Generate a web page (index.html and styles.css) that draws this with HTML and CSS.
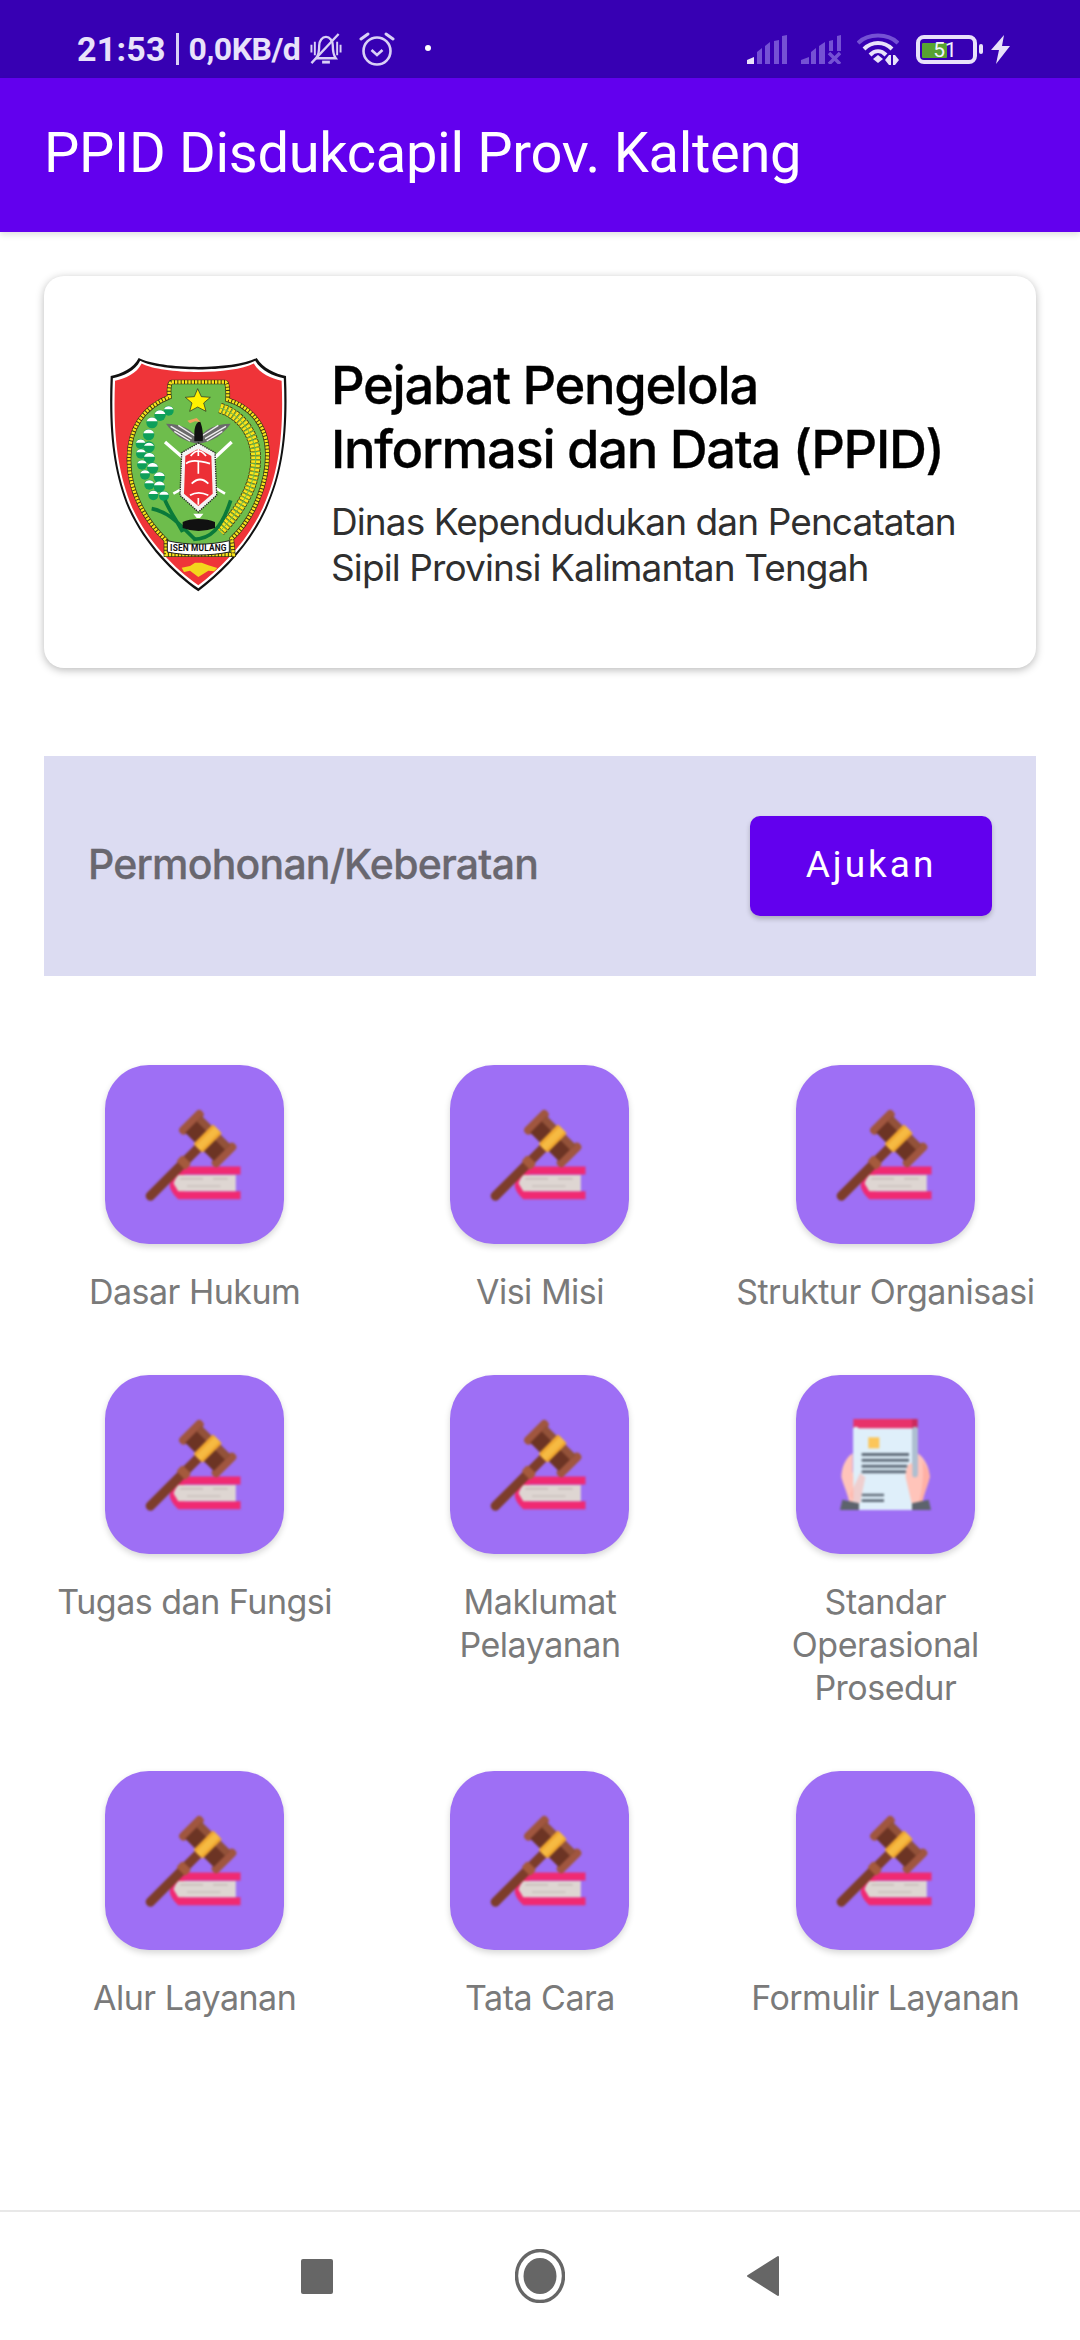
FILE: index.html
```html
<!DOCTYPE html>
<html lang="id">
<head>
<meta charset="utf-8">
<title>PPID Disdukcapil Prov. Kalteng</title>
<link rel="stylesheet" href="styles.css">
</head>
<body>
<svg class="defs" width="0" height="0" aria-hidden="true">
  <defs>
    <symbol id="gavel" viewBox="45 45 535 535">
      <path fill="#f02a72" d="M275 348H450V372H286L266 376 252 398 266 420 286 422H450V446H264C250 434 241 420 238 406 243 380 255 360 275 348Z"/>
      <path fill="#ded6d2" d="M264 374H436V422H264C258 412 252 404 250 398 254 388 258 380 264 374Z"/>
      <path fill="#c6bcb8" d="M270 383H338V387H270ZM368 383H412V387H368ZM290 405H390V409H290Z"/>
      <g transform="translate(352 265) rotate(45)">
        <rect x="-14" y="30" width="28" height="226" rx="13" fill="#7d3d2a"/>
        <rect x="-19" y="88" width="38" height="26" rx="6" fill="#a55a3c"/>
        <rect x="-82" y="-46" width="26" height="92" rx="12" fill="#a0563f"/>
        <rect x="56" y="-46" width="26" height="92" rx="12" fill="#a0563f"/>
        <rect x="-60" y="-35" width="120" height="70" fill="#6c3424"/>
        <rect x="-60" y="-35" width="120" height="22" fill="#935239"/>
        <rect x="-19" y="-41" width="38" height="82" rx="3" fill="#efa62f"/>
        <rect x="-10" y="-41" width="20" height="82" fill="#f6ba42"/>
      </g>
    </symbol>
    <symbol id="doc" viewBox="48 45 537 537">
      <path fill="#ffc4ba" d="M218 280C195 295 184 325 184 352 190 375 205 405 208 430H240L256 352C256 330 250 312 240 310 230 310 222 330 218 340Z"/>
      <path fill="#aebfd0" d="M395 200H413V450H395Z"/>
      <path fill="#dfeffa" d="M220 200H396V450H220Z"/>
      <path fill="#e8336a" d="M220 177H396V205H220Z"/>
      <path fill="#cc2a5c" d="M396 177H413V205H396Z"/>
      <rect x="265" y="232" width="33" height="33" fill="#fcc65a"/>
      <path fill="#5f6b78" d="M245 279H387V288H245ZM245 296H387V305H245ZM245 314H382V323H245ZM245 331H378V340H245ZM245 401H312V409H245ZM245 418H312V426H245Z"/>
      <path fill="#ffc4ba" d="M413 280C435 295 449 325 449 352 444 375 430 405 427 430H395L377 352C377 330 382 312 392 310 400 310 406 330 413 345Z"/>
      <path fill="#ffb0a4" d="M240 340 256 352 240 430H225L210 405Z" opacity=".5"/>
      <path fill="#ffb0a4" d="M427 300C440 320 449 335 449 352 444 375 430 405 427 430H416C428 390 432 340 427 300Z"/>
      <path fill="#5d636c" d="M187 419 237 430V450H180ZM446 419 396 430V450H453Z"/>
      <rect x="220" y="200" width="16" height="152" rx="8" fill="#dfeffa"/>
      <rect x="397" y="200" width="16" height="152" rx="8" fill="#aebfd0"/>
    </symbol>
  </defs>
</svg>

<div class="app">
  <header class="status">
    <div class="status-left">
      <span class="time">21:53</span>
      <span class="sep"></span>
      <span class="speed">0,0KB/d</span>
      <svg class="si-bell" viewBox="0 0 34 34" width="34" height="33">
        <g fill="none" stroke="#d9d0f6" stroke-width="2.4">
          <path d="M7 26C10 22 10 18 10 13 10 8 13 4 17 4 21 4 24 8 24 13 24 18 24 22 27 26H7Z"/>
          <path d="M13 30H21" stroke-width="3"/>
          <path d="M2 12V20M5.500 9V23M28.500 9V23M32 12V20" stroke-width="2"/>
          <path d="M2 31 30 1" stroke-width="2.4"/>
        </g>
      </svg>
      <svg class="si-alarm" viewBox="0 0 36 34" width="36" height="34">
        <g fill="none" stroke="#d9d0f6" stroke-width="2.6">
          <circle cx="18" cy="19" r="13.500"/>
          <path d="M12.500 18 18 23 23.500 18"/>
          <path d="M2 7 9 2M34 7 27 2" stroke-linecap="round" stroke-width="3"/>
        </g>
      </svg>
      <span class="dot"></span>
    </div>
    <div class="status-right">
      <svg class="si-signal" viewBox="0 0 40 29" width="40" height="29">
        <path fill="#7551d4" d="M10 17 15 13V29H10ZM18 11 23 7V29H18ZM27 6 32 5V29H27ZM35 1 40 0V29H35Z"/>
        <path fill="#e8e2fa" d="M0 29V25L7 22V29Z"/>
      </svg>
      <svg class="si-signal2" viewBox="0 0 40 29" width="40" height="29">
        <path fill="#7551d4" d="M0 29V25L8 22V29ZM10 17 15 13V29H10ZM18 11 24 7V29H18ZM28 6 32 5V16H28ZM36 1 40 0V16H36Z"/>
        <path fill="none" stroke="#7551d4" stroke-width="3.400" d="M28 18 39 29M39 18 28 29"/>
      </svg>
      <svg class="si-wifi" viewBox="0 0 42 32" width="42" height="32">
        <path fill="none" stroke="#7551d4" stroke-width="4" d="M1 10C11 0 31 0 41 10"/>
        <path fill="none" stroke="#e8e2fa" stroke-width="4" d="M7 16C15 8 27 8 35 16M13 22C18 17 24 17 29 22"/>
        <path fill="#e8e2fa" d="M21 22 26 26 21 30 16 26Z"/>
        <path fill="#e8e2fa" d="M32 22H34V32H32L28 27ZM36 22H38L42 27 38 32H36Z"/>
      </svg>
      <div class="battery">
        <span class="battery-body"><span class="battery-fill"></span><span class="battery-num">51</span></span>
        <span class="battery-tip"></span>
      </div>
      <svg class="si-bolt" viewBox="0 0 20 29" width="20" height="29">
        <path fill="#e8e2fa" d="M13 0 0 15H8L5 29 19 11H11Z"/>
      </svg>
    </div>
  </header>

  <div class="appbar">PPID Disdukcapil Prov. Kalteng</div>

  <main class="main">
    <section class="card">
      <svg class="logo" viewBox="0 0 720 840" width="240" height="280" role="img" aria-label="Lambang Provinsi Kalimantan Tengah">
        <path fill="#111" d="M176 78C240 112 460 115 530 78 550 110 585 125 618 132 625 300 610 420 560 530 510 640 430 720 355 778 280 725 195 640 145 530 100 420 85 300 92 132 125 125 160 110 176 78Z"/>
        <path fill="#fff" transform="translate(355 415) scale(.975) translate(-355 -415)" d="M176 78C240 112 460 115 530 78 550 110 585 125 618 132 625 300 610 420 560 530 510 640 430 720 355 778 280 725 195 640 145 530 100 420 85 300 92 132 125 125 160 110 176 78Z"/>
        <path fill="#ef3439" transform="translate(355 415) scale(.95) translate(-355 -415)" d="M176 78C240 112 460 115 530 78 550 110 585 125 618 132 625 300 610 420 560 530 510 640 430 720 355 778 280 725 195 640 145 530 100 420 85 300 92 132 125 125 160 110 176 78Z"/>
        <path fill="#6ebd4c" stroke="#3a3412" stroke-width="14" d="M275 150H435Q445 150 443 203C500 220 560 270 562 360 565 450 520 560 455 620L460 668H258L258 625C190 560 145 470 147 380 147 290 190 225 268 195 264 150 275 150 275 150Z"/>
        <path fill="none" stroke="#f8e41c" stroke-width="10" stroke-dasharray="7 3" d="M275 150H435Q445 150 443 203C500 220 560 270 562 360 565 450 520 560 455 620L460 668H258L258 625C190 560 145 470 147 380 147 290 190 225 268 195 264 150 275 150 275 150Z"/>
        <path fill="#fff200" stroke="#222" stroke-width="2" d="M353 170 364 194 391 196 371 213 378 238 353 225 329 238 336 213 316 196 343 194Z"/>
        <g>
          <circle cx="266" cy="236" r="15" fill="#0e9f5a"/><circle cx="240" cy="250" r="17" fill="#0e9f5a"/><circle cx="216" cy="272" r="17" fill="#0e9f5a"/><circle cx="206" cy="308" r="17" fill="#0e9f5a"/><circle cx="182" cy="336" r="15" fill="#0e9f5a"/><circle cx="207" cy="345" r="17" fill="#0e9f5a"/><circle cx="183" cy="365" r="15" fill="#0e9f5a"/><circle cx="208" cy="378" r="17" fill="#0e9f5a"/><circle cx="186" cy="398" r="15" fill="#0e9f5a"/><circle cx="218" cy="408" r="17" fill="#0e9f5a"/><circle cx="195" cy="428" r="15" fill="#0e9f5a"/><circle cx="238" cy="436" r="17" fill="#0e9f5a"/><circle cx="208" cy="458" r="15" fill="#0e9f5a"/><circle cx="238" cy="464" r="17" fill="#0e9f5a"/><circle cx="220" cy="490" r="15" fill="#0e9f5a"/><circle cx="252" cy="492" r="15" fill="#0e9f5a"/>
          <path fill="#fff" d="M252 232a15 15 0 0 1 28 0zM224 246a17 17 0 0 1 32 0zM200 268a17 17 0 0 1 32 0zM190 304a17 17 0 0 1 32 0zM168 332a15 15 0 0 1 28 0zM192 341a17 17 0 0 1 30 0zM169 361a15 15 0 0 1 28 0zM192 374a17 17 0 0 1 32 0zM172 394a15 15 0 0 1 28 0zM202 404a17 17 0 0 1 32 0zM181 424a15 15 0 0 1 28 0zM222 432a17 17 0 0 1 32 0zM194 454a15 15 0 0 1 28 0zM222 460a17 17 0 0 1 32 0zM206 486a15 15 0 0 1 28 0zM238 488a15 15 0 0 1 28 0z"/>
        </g>
        <path fill="none" stroke="#4a3a10" stroke-width="32" stroke-dasharray="9 3" d="M420 228C490 250 535 320 526 400 518 480 470 545 420 598"/>
        <path fill="none" stroke="#f8e41c" stroke-width="27" stroke-dasharray="8 4" d="M420 228C490 250 535 320 526 400 518 480 470 545 420 598"/>
        <path fill="none" stroke="#6ebd4c" stroke-width="3" d="M420 228C490 250 535 320 526 400 518 480 470 545 420 598"/>
        <path fill="none" stroke="#fff" stroke-width="10" d="M255 330 330 395M455 330 385 395"/>
        <path fill="none" stroke="#fff" stroke-width="8" d="M385 455 435 485M325 460 280 485"/>
        <path fill="#6a6a6a" d="M258 275C300 275 340 290 355 325 370 290 410 275 452 275 430 305 400 330 355 335 310 330 280 305 258 275Z"/>
        <path fill="none" stroke="#f0f0f0" stroke-width="4" d="M272 283 335 320M295 280 345 312M283 298 330 327M438 283 375 320M415 280 365 312M427 298 380 327"/>
        <path fill="#111" d="M343 305C343 283 350 270 360 268 368 285 370 310 368 328H343Z"/>
        <path fill="#f0a35b" d="M322 266 350 258 362 270 345 268 330 274Z"/>
        <path fill="#f4f4f4" stroke="#222" stroke-width="4" stroke-dasharray="4 3" d="M355 333 405 362 410 490 355 540 300 490 305 362Z"/>
        <path fill="#ec2f36" d="M355 350 394 372 398 485 355 522 312 485 316 372Z"/>
        <path fill="none" stroke="#fff" stroke-width="5" d="M332 372Q355 342 378 372M355 350V372M318 395Q335 378 390 395M355 385V425M335 455Q360 430 385 455M330 490Q355 475 385 490M355 498V518"/>
        <path fill="none" stroke="#0a7a3a" stroke-width="11" d="M215 530C270 540 300 580 345 622M255 505C270 540 290 565 308 600M340 622C390 622 425 590 452 505"/>
        <path fill="#111" d="M308 570C330 558 380 558 405 570V588Q355 606 308 588Z"/>
        <path fill="#fff" d="M340 545H370L360 558H350Z"/>
        <path fill="#fff" stroke="#222" stroke-width="3" d="M262 626C320 640 390 640 448 626V660C390 672 320 672 262 660Z"/>
        <text class="logo-text" x="355" y="656" text-anchor="middle">ISEN MULANG</text>
        <path fill="#f3d61c" d="M305 707 330 702 345 692H365L385 700 412 708 402 718 385 716 355 735 330 716 312 720Z"/>
      </svg>
      <div class="card-text">
        <h1 class="card-title">Pejabat Pengelola<br>Informasi dan Data (PPID)</h1>
        <p class="card-sub">Dinas Kependudukan dan Pencatatan<br>Sipil Provinsi Kalimantan Tengah</p>
      </div>
    </section>

    <section class="banner">
      <span class="banner-label">Permohonan/Keberatan</span>
      <button class="btn" type="button">Ajukan</button>
    </section>

    <section class="grid">
      <a class="item"><span class="tile"><svg class="tile-icon"><use href="#gavel"/></svg></span><span class="label">Dasar Hukum</span></a>
      <a class="item"><span class="tile"><svg class="tile-icon"><use href="#gavel"/></svg></span><span class="label">Visi Misi</span></a>
      <a class="item"><span class="tile"><svg class="tile-icon"><use href="#gavel"/></svg></span><span class="label">Struktur Organisasi</span></a>
      <a class="item"><span class="tile"><svg class="tile-icon"><use href="#gavel"/></svg></span><span class="label">Tugas dan Fungsi</span></a>
      <a class="item"><span class="tile"><svg class="tile-icon"><use href="#gavel"/></svg></span><span class="label">Maklumat<br>Pelayanan</span></a>
      <a class="item"><span class="tile"><svg class="tile-icon"><use href="#doc"/></svg></span><span class="label">Standar<br>Operasional<br>Prosedur</span></a>
      <a class="item"><span class="tile"><svg class="tile-icon"><use href="#gavel"/></svg></span><span class="label">Alur Layanan</span></a>
      <a class="item"><span class="tile"><svg class="tile-icon"><use href="#gavel"/></svg></span><span class="label">Tata Cara</span></a>
      <a class="item"><span class="tile"><svg class="tile-icon"><use href="#gavel"/></svg></span><span class="label">Formulir Layanan</span></a>
    </section>
  </main>

  <nav class="navbar">
    <span class="nav-square"></span>
    <svg class="nav-home" viewBox="0 0 50 54" width="50" height="54">
      <ellipse cx="25" cy="27" rx="23.500" ry="25.500" fill="none" stroke="#666" stroke-width="3.400"/>
      <ellipse cx="25" cy="27" rx="16.500" ry="18" fill="#666"/>
    </svg>
    <svg class="nav-back" viewBox="0 0 32 42" width="32" height="42">
      <path fill="#666" stroke="#666" stroke-width="2" stroke-linejoin="round" d="M31 2V40L1 21Z"/>
    </svg>
  </nav>
</div>
</body>
</html>
```

FILE: styles.css
```css
* { box-sizing: border-box; }
html, body { margin: 0; padding: 0; }
body { width: 1080px; height: 2340px; background: #fff; font-family: "Inter", "Roboto", sans-serif; overflow: hidden; }
.defs { position: absolute; }

.app { width: 1080px; height: 2340px; display: flex; flex-direction: column; }

.status { height: 78px; background: #3700b3; color: #e8e2fa; display: flex; justify-content: space-between; align-items: center; padding: 20px 69px 0 77px; font-family: "Roboto", sans-serif; }
.status-left { display: flex; align-items: center; }
.time { font-size: 34px; font-weight: 700; letter-spacing: 0.2px; }
.sep { width: 3px; height: 32px; background: #d9d0f6; margin: 0 10px; }
.speed { font-size: 32px; font-weight: 700; letter-spacing: -0.5px; }
.si-bell { margin-left: 9px; }
.si-alarm { margin-left: 16px; }
.dot { width: 6px; height: 6px; background: #fff; border-radius: 50%; margin: 0 0 2px 30px; }
.status-right { display: flex; align-items: center; }
.si-signal2 { margin-left: 14px; }
.si-wifi { margin-left: 16px; }
.battery { display: flex; align-items: center; gap: 2px; margin-left: 17px; }
.battery-body { width: 61px; height: 29px; border: 4px solid #e8e2fa; border-radius: 8px; position: relative; display: block; }
.battery-fill { position: absolute; left: 2px; top: 4px; bottom: 2px; width: 25px; background: #57a331; border-radius: 1px; }
.battery-num { position: absolute; inset: 0; text-align: center; font-size: 21px; line-height: 22px; font-weight: 400; color: #f2f2ff; padding-right: 3px; }
.battery-tip { width: 4px; height: 10px; background: #e8e2fa; border-radius: 2px; }
.si-bolt { margin-left: 8px; }

.appbar { height: 154px; background: #6200ee; color: #fff; font-family: "Roboto", sans-serif; font-size: 56px; letter-spacing: -0.3px; line-height: 150px; padding-left: 44px; box-shadow: 0 3px 6px rgba(0,0,0,.12); position: relative; }

.main { flex: 1; display: flex; flex-direction: column; padding-top: 44px; }

.card { margin: 0 44px; height: 392px; background: #fff; border-radius: 20px; box-shadow: 0 2px 8px rgba(0,0,0,.28); display: flex; align-items: center; padding-left: 36px; }
.logo { flex: none; }
.card-text { margin-left: 11px; }
.card-title { margin: 0; font-size: 52.500px; line-height: 64px; font-weight: 500; color: #000; letter-spacing: -1.300px; -webkit-text-stroke: .3px #000; }
.card-sub { margin: 18px 0 0; font-size: 37px; line-height: 46px; color: #2f2f2f; letter-spacing: -0.900px; }
.logo-text { font-family: "Roboto", sans-serif; font-size: 25px; font-weight: 700; letter-spacing: .5px; fill: #111; }

.banner { margin: 88px 44px 0; height: 220px; background: #dcdcf2; display: flex; align-items: center; justify-content: space-between; padding: 0 44px; }
.banner-label { font-size: 41px; font-weight: 500; color: #69676f; letter-spacing: -0.800px; margin-top: -4px; -webkit-text-stroke: .3px #69676f; }
.btn { width: 242px; height: 100px; border: 0; border-radius: 10px; background: #6200ee; color: #fff; font-family: "Roboto", sans-serif; font-size: 37px; letter-spacing: 3px; padding-bottom: 4px; box-shadow: 0 3px 5px rgba(0,0,0,.22); }

.grid { margin-top: 89px; padding: 0 22px; display: grid; grid-template-columns: repeat(3, 1fr); row-gap: 62px; }
.item { display: flex; flex-direction: column; align-items: center; text-align: center; }
.tile { width: 179px; height: 179px; background: #9e6ff5; border-radius: 44px; box-shadow: 0 3px 6px rgba(0,0,0,.16); display: block; }
.tile-icon { width: 179px; height: 179px; display: block; filter: blur(.9px); }
.label { margin-top: 26px; font-size: 34px; line-height: 43px; color: #7a7a7a; letter-spacing: -0.500px; white-space: nowrap; }

.navbar { margin-top: auto; height: 130px; border-top: 2px solid #e8e8e8; background: #fff; display: flex; align-items: center; justify-content: center; gap: 182px; flex: none; }
.nav-square { width: 32px; height: 35px; background: #666; border-radius: 2px; }
```
